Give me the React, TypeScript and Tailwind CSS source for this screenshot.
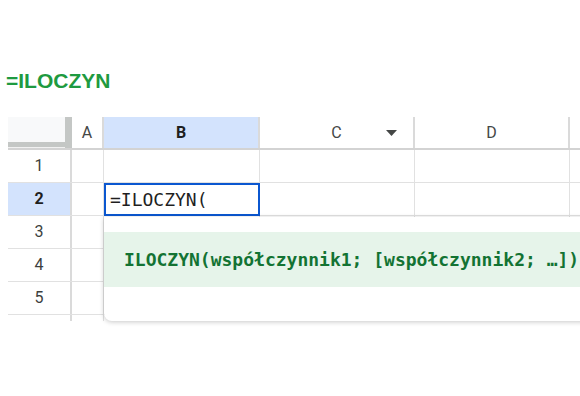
const mono = "font-['DejaVu_Sans_Mono','Liberation_Mono',monospace]";
const sans = "font-['Roboto','Liberation_Sans',sans-serif]";

const cols = [
  { key: "A", w: "w-[32px]" },
  { key: "B", w: "w-[156px]", active: true },
  { key: "C", w: "w-[155px]", menu: true },
  { key: "D", w: "w-[155px]" },
  { key: "E", w: "w-[20px]" },
];

function HeaderRow() {
  return (
    <div className="flex h-[33px] border-b-2 border-[#d3d3d3]">
      {/* narożnik z paskami zamrożenia */}
      <div className="flex w-[64px] shrink-0">
        <div className="flex w-[57px] flex-col">
          <div className="h-[25px] bg-[#f8f9fa]" />
          <div className="h-[5px] bg-[#c4c7c5]" />
          <div className="flex-1 bg-[#f1f1f1]" />
        </div>
        <div className="w-[7px] bg-[#c4c7c5]" />
      </div>
      {cols.map((c) => (
        <div
          key={c.key}
          className={`${c.w} relative flex shrink-0 items-center justify-center border-r-2 border-[#dadada] ${sans} text-[16px] ${
            c.active ? "bg-[#d3e3fd] font-bold text-[#1f1f1f]" : "text-[#444746]"
          }`}
        >
          {c.key !== "E" && c.key}
          {c.menu && (
            <svg
              className="absolute right-[16px] top-[13px]"
              width="11"
              height="6"
              viewBox="0 0 11 6"
            >
              <path d="M0 0h11L5.5 6z" fill="#444746" />
            </svg>
          )}
        </div>
      ))}
    </div>
  );
}

function Row({ n, selected }: { n: number; selected?: boolean }) {
  return (
    <div className="flex h-[33px] border-b border-[#e1e1e1]">
      <div
        className={`flex w-[64px] shrink-0 items-center justify-center border-r-2 border-[#dadada] ${sans} text-[16px] ${
          selected ? "bg-[#d3e3fd] font-bold text-[#1f1f1f]" : "text-[#3c3f3e]"
        }`}
      >
        {n}
      </div>
      {cols.map((c) => (
        <div key={c.key} className={`${c.w} shrink-0 border-r border-[#e1e1e1]`} />
      ))}
    </div>
  );
}

export default function App() {
  return (
    <div className="relative h-[396px] w-[580px] overflow-hidden bg-white">
      <div
        className={`h-[117px] pl-[6px] pt-[69px] font-['Liberation_Sans',Arial,sans-serif] text-[21px] font-bold leading-[24px] text-[#1e9a40]`}
      >
        =ILOCZYN
      </div>

      <div className="relative pl-[8px]">
        <HeaderRow />
        {[1, 2, 3, 4, 5].map((n) => (
          <Row key={n} n={n} selected={n === 2} />
        ))}
        <div className="flex h-[6px]">
          <div className="w-[64px] shrink-0 border-r-2 border-[#dadada]" />
          {cols.map((c) => (
            <div key={c.key} className={`${c.w} shrink-0 border-r border-[#e1e1e1]`} />
          ))}
        </div>

        {/* aktywna komórka B2 */}
        <div
          className={`absolute left-[104px] top-[66px] flex h-[33px] w-[156px] items-center border-2 border-[#0b57d0] bg-white pl-[4px] ${mono} text-[18px] text-[#1f1f1f]`}
        >
          =ILOCZYN(
        </div>

        {/* podpowiedź formuły */}
        <div className="absolute left-[104px] top-[100px] h-[104px] w-[500px] rounded-bl-lg bg-white pt-[15px] shadow-[0_1px_5px_rgba(0,0,0,0.22)]">
          <div
            className={`flex h-[55px] items-center whitespace-nowrap bg-[#e6f4ea] pl-[20px] ${mono} text-[18px] font-bold text-[#137333]`}
          >
            ILOCZYN(współczynnik1; [współczynnik2; …])
          </div>
        </div>
      </div>
    </div>
  );
}
